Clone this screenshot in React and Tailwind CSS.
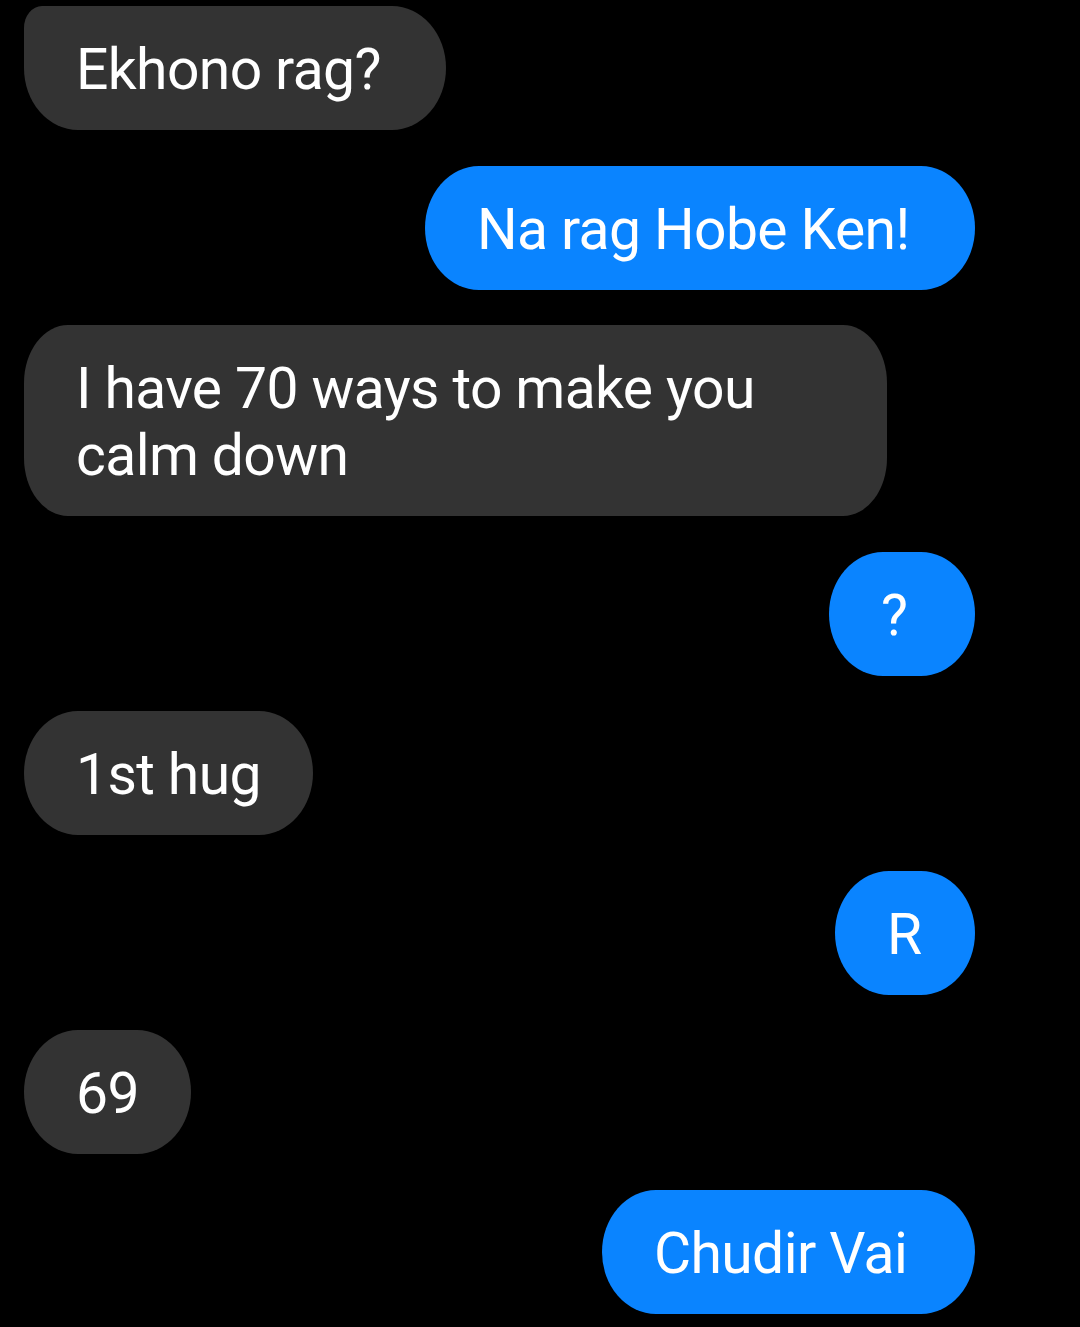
export default function App() {
  const msgs = [
    { me: false, t: "Ekhono rag?", c: "w-[422px] rounded-[54px/62px] rounded-tl-[18px_22px]" },
    { me: true, t: "Na rag Hobe Ken!", c: "w-[550px] rounded-[54px/62px]" },
    { me: false, t: "I have 70 ways to make you calm down", c: "w-[863px] rounded-[44px/58px]" },
    { me: true, t: "?", c: "w-[146px] rounded-[54px/62px]" },
    { me: false, t: "1st hug", c: "w-[289px] rounded-[54px/62px]" },
    { me: true, t: "R", c: "w-[140px] rounded-[54px/62px]" },
    { me: false, t: "69", c: "w-[167px] rounded-[54px/62px]" },
    { me: true, t: "Chudir Vai", c: "w-[373px] rounded-[54px/62px]" },
  ];
  return (
    <div
      className="w-[1080px] h-[1327px] bg-black overflow-hidden pt-[6px] pl-[24px] pr-[105px] flex flex-col gap-[35.5px]"
      style={{ fontFamily: "Roboto, 'Liberation Sans', sans-serif" }}
    >
      {msgs.map((m, i) => (
        <div key={i} className={m.me ? "flex justify-end" : "flex justify-start"}>
          <div
            className={
              (m.me ? "bg-[#0a84ff] " : "bg-[#333333] ") +
              m.c +
              " text-white text-[57px] tracking-[-0.6px] leading-[67px] pl-[52px] pr-[40px] pt-[30px] pb-[27px] whitespace-pre-wrap"
            }
          >
            {m.t}
          </div>
        </div>
      ))}
    </div>
  );
}
